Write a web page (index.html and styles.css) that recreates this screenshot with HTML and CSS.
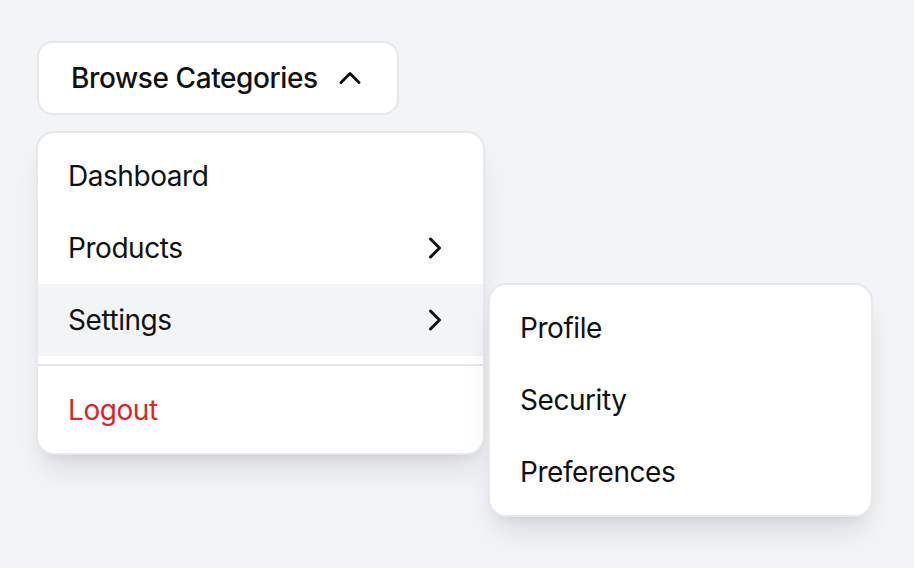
FILE: index.html
```html
<!DOCTYPE html>
<html lang="en">
<head>
<meta charset="utf-8">
<title>Browse Categories</title>
<link rel="stylesheet" href="styles.css">
</head>
<body>
<div class="page">
  <button class="trigger" type="button">
    <span class="trigger-label">Browse Categories</span>
    <svg class="icon" viewBox="0 0 24 24" fill="none" stroke="currentColor" stroke-width="2" stroke-linecap="round" stroke-linejoin="round"><path d="m18 15-6-6-6 6"/></svg>
  </button>
  <div class="menus">
    <div class="menu main-menu">
      <div class="item">Dashboard</div>
      <div class="item">Products
        <svg class="icon" viewBox="0 0 24 24" fill="none" stroke="currentColor" stroke-width="2" stroke-linecap="round" stroke-linejoin="round"><path d="m9 18 6-6-6-6"/></svg>
      </div>
      <div class="item active">Settings
        <svg class="icon" viewBox="0 0 24 24" fill="none" stroke="currentColor" stroke-width="2" stroke-linecap="round" stroke-linejoin="round"><path d="m9 18 6-6-6-6"/></svg>
      </div>
      <div class="divider"></div>
      <div class="item danger">Logout</div>
    </div>
    <div class="menu sub-menu">
      <div class="item">Profile</div>
      <div class="item">Security</div>
      <div class="item">Preferences</div>
    </div>
  </div>
</div>
</body>
</html>
```
FILE: styles.css
```css
* { box-sizing: border-box; }
html, body {
  margin: 0;
  min-height: 100vh;
  background: #f3f4f6;
  font-family: Inter, "Noto Sans", sans-serif;
  color: #111111;
}
.page {
  padding: 41px 0 40px 36px;
  display: flex;
  flex-direction: column;
  align-items: flex-start;
  gap: 16px;
}
.trigger {
  margin-left: 1px;
  display: inline-flex;
  align-items: center;
  gap: 14px;
  height: 74px;
  padding: 0 29px 0 32px;
  background: #ffffff;
  border: 2px solid #e5e7eb;
  border-radius: 16px;
  font-family: inherit;
  font-size: 28px;
  letter-spacing: -0.4px;
  font-weight: 500;
  color: #111111;
}
.icon {
  width: 36px;
  height: 36px;
  flex: none;
}
.menus {
  display: flex;
  align-items: flex-start;
}
.menu {
  background: #ffffff;
  border: 2px solid #e7e8eb;
  border-radius: 18px;
  padding: 7px 0;
  box-shadow: 0 20px 30px -6px rgba(0,0,0,0.10), 0 8px 12px -8px rgba(0,0,0,0.10);
}
.main-menu { width: 449px; }
.sub-menu {
  width: 385px;
  margin-left: 3px;
  margin-top: 152px;
}
.item {
  height: 72px;
  padding: 0 30px;
  display: flex;
  align-items: center;
  justify-content: space-between;
  font-size: 28px;
  letter-spacing: -0.45px;
  font-weight: 400;
}
.item.active { background: #f3f4f6; }
.item.danger { color: #dc2626; }
.divider {
  height: 2px;
  margin: 8px 0;
  background: #e5e7eb;
}
```
